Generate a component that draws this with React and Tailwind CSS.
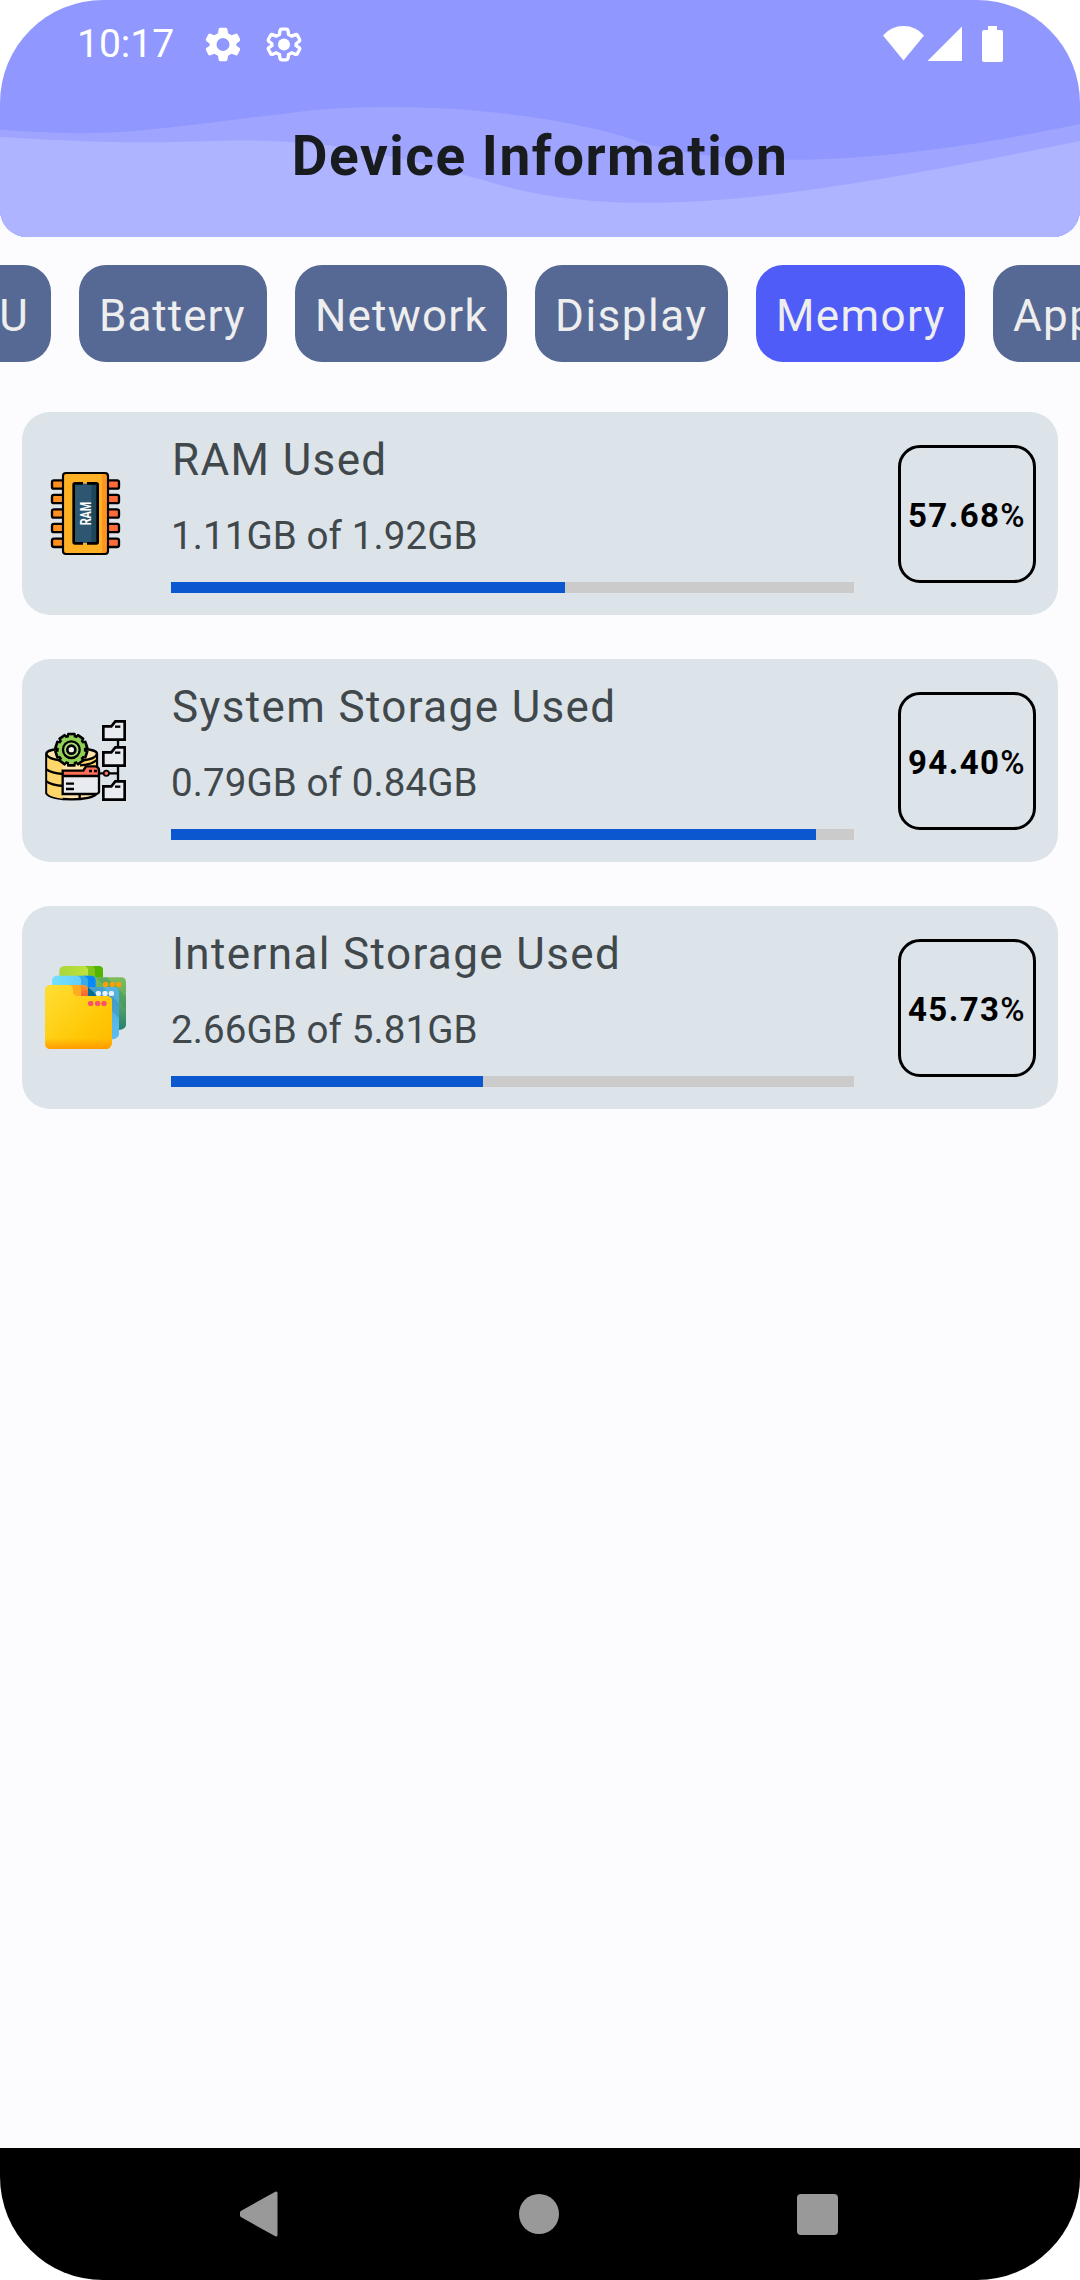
const chips = [
  { label: 'CPU', width: 'w-[136px]', text: 'pl-[25px] tracking-[1.375px]' },
  { label: 'Battery', width: 'w-[188px]', text: 'pl-[20px] tracking-[1px]' },
  { label: 'Network', width: 'w-[212px]', text: 'pl-[20px] tracking-[1.2px]' },
  { label: 'Display', width: 'w-[193px]', text: 'pl-[20px] tracking-[1.5px]' },
  { label: 'Memory', width: 'w-[209px]', text: 'pl-[20px] tracking-[1.375px]', active: true },
  { label: 'Apps', width: 'w-[150px]', text: 'pl-[20px] tracking-[1.375px]' },
];

function RamIcon() {
  const rows = [103, 146.5, 190, 233.5, 278];
  return (
    <svg viewBox="0 0 330 360" className="mt-[38px] w-[110px] h-[120px]">
      {rows.map((y) => (
        <g key={y} stroke="#000" strokeWidth="7">
          <rect x="66" y={y - 12} width="44" height="25" rx="6" fill="#ff8f1f" />
          <rect x="222" y={y - 12} width="45" height="25" rx="6" fill="#ff6c3c" />
        </g>
      ))}
      <rect x="99" y="69" width="135" height="243" rx="9" fill="#ffb125" />
      <path d="M216 69h9q9 0 9 9v225q0 9-9 9h-9z" fill="#ff951f" />
      <rect x="99" y="69" width="135" height="243" rx="9" fill="none" stroke="#000" strokeWidth="6.500" />
      <rect x="131" y="101" width="73" height="178" fill="#2d5670" />
      <rect x="184" y="101" width="20" height="178" fill="#1d4658" />
      <path d="M159 100h-24q-4 0-4 4v172q0 4 4 4h24M171 100h28q4 0 4 4v172q0 4-4 4h-28" fill="none" stroke="#000" strokeWidth="8" />
      <text transform="translate(183 226) rotate(-90)" textLength="71" lengthAdjust="spacingAndGlyphs" fontSize="45" fontWeight="700" fontFamily="Roboto, sans-serif" fill="#fff">RAM</text>
    </svg>
  );
}

function SystemIcon() {
  const teeth = [0, 36, 72, 108, 144, 180, 216, 252, 288, 324];
  return (
    <svg viewBox="0 0 330 360" className="mt-[41px] w-[110px] h-[120px]">
      <path d="M49 161C49 139 201 139 201 161V280C190 304 60 304 49 280Z" fill="#ffe5a9" stroke="#000" strokeWidth="7" />
      <path d="M52 166Q70 178 98 181V296Q58 292 52 280Z" fill="#ffd66a" />
      <path d="M150 180Q185 176 198 166V202H150Z" fill="#ffd66a" />
      <path d="M49 161C55 192 195 192 201 161M49 208Q64 219 99 222M49 244Q64 255 99 258M150 196Q185 194 200 180" fill="none" stroke="#000" strokeWidth="7" />
      <g fill="#000">
        {teeth.map((a) => <rect key={a} x="111" y="98" width="26" height="26" rx="3" transform={`rotate(${a} 124 149)`} />)}
        <circle cx="124" cy="149" r="46" />
      </g>
      <g fill="#91cf56">
        {teeth.map((a) => <rect key={a} x="117" y="106" width="14" height="20" transform={`rotate(${a} 124 149)`} />)}
        <circle cx="124" cy="149" r="38" />
      </g>
      <circle cx="124" cy="149" r="25" fill="#a7dd75" stroke="#000" strokeWidth="7" />
      <circle cx="124" cy="149" r="12" fill="#f0f2f4" stroke="#000" strokeWidth="8" />
      <path d="M98 212H160L168 199H197Q207 201 207 211V276Q205 282 196 282H98Z" fill="#e8ebf0" />
      <path d="M98 212H160L168 199H197Q207 201 207 211V228H98Z" fill="#fc7058" />
      <path d="M98 212H160L168 199H197Q207 201 207 211V276Q205 282 196 282H98ZM98 228H207M108 251H132M108 267H132M149 283V295M177 213H186M192 213H201" fill="none" stroke="#000" strokeWidth="7" />
      <path d="M264 116V146M264 196V247M207 220H264" stroke="#000" strokeWidth="7" />
      <ellipse cx="229" cy="220" rx="8" ry="8" fill="#fc7058" stroke="#000" strokeWidth="5" />
      {[0, 78, 180].map((y) => (
        <g key={y} transform={`translate(0 ${y})`}>
          <path d="M220 119V79H244L256 64H284V119Z" fill="#e8ebf0" stroke="#000" strokeWidth="8" />
          <path d="M255 80H271" stroke="#000" strokeWidth="7" />
        </g>
      ))}
    </svg>
  );
}

function FoldersIcon() {
  return (
    <svg viewBox="0 0 330 360" className="mt-[44px] w-[110px] h-[120px]">
      <defs>
        <linearGradient id="yellow" x1="0" y1="0" x2="1" y2="1"><stop offset="0" stopColor="#ffdf35" /><stop offset="0.65" stopColor="#ffc806" /><stop offset="1" stopColor="#ffb800" /></linearGradient>
        <linearGradient id="base" x1="0" y1="0" x2="0" y2="1"><stop offset="0" stopColor="#ff9a00" stopOpacity="0" /><stop offset="1" stopColor="#ff9a00" /></linearGradient>
        <linearGradient id="green" x1="0" y1="0" x2="0" y2="1"><stop offset="0" stopColor="#8fc456" /><stop offset="0.5" stopColor="#60ad63" /><stop offset="1" stopColor="#26806d" /></linearGradient>
        <linearGradient id="sky" x1="0" y1="0" x2="0" y2="1"><stop offset="0" stopColor="#5bbbe6" /><stop offset="0.35" stopColor="#52aedb" /><stop offset="1" stopColor="#5cbdf0" /></linearGradient>
        <linearGradient id="lime" x1="0" y1="0" x2="1" y2="0"><stop offset="0" stopColor="#a8d63a" /><stop offset="1" stopColor="#bfe33c" /></linearGradient>
        <linearGradient id="cyan" x1="0" y1="0" x2="1" y2="0"><stop offset="0" stopColor="#73e2fb" /><stop offset="1" stopColor="#66cdf8" /></linearGradient>
        <linearGradient id="tabs" x1="0" y1="0" x2="0" y2="1"><stop offset="0" stopColor="#ff9a2c" /><stop offset="1" stopColor="#f04e3c" /></linearGradient>
      </defs>
      <path d="M180 48H208Q219 49 219 61V82H276Q288 84 288 96V226Q285 239 267 240H180Z" fill="url(#green)" />
      <path d="M190 48H208Q219 49 219 61V81H190Z" fill="#54b500" />
      <path d="M165 48H184Q195 50 195 61V100H165Z" fill="#80c51d" />
      <path d="M88 82V62Q90 49 103 48H162Q174 50 174 62V82Z" fill="url(#lime)" />
      <path d="M197 82L288 176V140L230 82Z" fill="#2f8560" opacity=".3" />
      <path d="M160 77H185Q197 79 197 91V111H255Q267 113 267 125V254Q262 267 246 268H160Z" fill="url(#sky)" />
      <path d="M160 77H185Q197 79 197 91V111H160Z" fill="#078af8" />
      <path d="M140 77H162Q173 80 174 91V111H140Z" fill="#35ace9" />
      <path d="M66 110V91Q68 78 80 77H141Q153 79 153 91V111Z" fill="url(#cyan)" />
      <path d="M174 111L267 205V160L218 111Z" fill="#1f6e9a" opacity=".28" />
      <path d="M174 111V139H204Z" fill="#086c95" />
      <path d="M140 105H162Q174 107 174 118V150H140Z" fill="url(#tabs)" />
      <path d="M120 105H142Q153 107 153 118V150H120Z" fill="#ffad1e" />
      <path d="M45 120Q45 106 59 105H117Q129 107 129 119V130Q132 138 141 138H234Q246 141 246 151V281Q241 297 228 297H60Q46 295 45 281Z" fill="url(#yellow)" />
      <path d="M45 265H246V281Q241 297 228 297H60Q46 295 45 281Z" fill="url(#base)" />
      {[182, 203, 222].map((x) => <rect key={x} x={x - 8} y="153" width="16" height="15" rx="6" fill="#fb506d" />)}
      {[205, 225, 244].map((x) => <rect key={x} x={x - 8} y="123" width="16" height="15" rx="6" fill="#e9f3ff" />)}
      {[227, 247, 266].map((x) => <rect key={x} x={x - 8} y="96" width="16" height="15" rx="6" fill="#ff9f07" />)}
    </svg>
  );
}

const GEAR = 'M42 2H58Q62 2 63 6L65 19L76 25L88 20Q92 19 94 22L101 35Q103 39 100 42L90 50V56L100 63Q103 66 101 69L94 83Q92 86 88 85L76 80L65 86L63 99Q62 103 58 103H42Q38 103 37 99L35 86L24 80L12 85Q8 86 6 83L-1 69Q-3 66 0 63L10 56V50L0 42Q-3 39 -1 35L6 22Q8 19 12 20L24 25L35 19L37 6Q38 2 42 2Z';

function Header() {
  return (
    <header className="relative h-[237px] shrink-0 overflow-hidden rounded-b-[27px] bg-[#9098ff]">
      <svg viewBox="0 0 1080 237" className="absolute inset-0 h-full w-full">
        <path d="M0 129.500C115 138 130 132 290 113C390 99 550 110 640 142C750 174 910 160 1080 124V237H0Z" fill="#9fa4ff" />
        <path d="M0 137C90 142 130 144 230 140.500C340 139 400 158 480 179C620 225 790 200 1080 141V237H0Z" fill="#aeb4ff" />
      </svg>
      <div className="relative flex h-[88px] items-center pl-[77px] pr-[76px]">
        <span className="w-[128px] text-[39px] leading-[46px] text-white">10:17</span>
        <svg viewBox="-4 0 108 105" className="h-[35px] w-[36px]">
          <path d={GEAR + 'M50 72A19.500 19.500 0 1 0 50 33A19.500 19.500 0 0 0 50 72Z'} fill="#fff" fillRule="evenodd" />
        </svg>
        <svg viewBox="-4 0 108 105" className="ml-[25px] h-[35px] w-[36px]">
          <path d={GEAR} fill="none" stroke="#fff" strokeWidth="11" transform="translate(4.500 4.700) scale(.91)" />
          <circle cx="50" cy="52.500" r="18" fill="#fff" />
        </svg>
        <svg viewBox="0 0 124 40" className="ml-auto h-[40px] w-[124px]">
          <path d="M3 11.500Q11 2 23.500 2T44 11.500L23.500 36.500Z" fill="#fff" />
          <path d="M82 2.500V37H47.500Z" fill="#fff" />
          <path d="M108 2H117V6H121Q123 6 123 8V36Q123 38 121 38H104Q102 38 102 36V8Q102 6 104 6H108Z" fill="#fff" />
        </svg>
      </div>
      <h1 className="relative mt-[36px] text-center text-[55px] font-bold leading-[64px] tracking-[1.5px] text-[#191c1e]">Device Information</h1>
    </header>
  );
}

function Card({ icon, title, detail, value }) {
  return (
    <section className="flex h-[203px] rounded-[28px] bg-[#dce3e9] pl-2 pr-[22px]">
      <div className="w-[141px] shrink-0">{icon}</div>
      <div className="w-[683px] shrink-0 text-[#40484c]">
        <h2 className="mt-[22px] pl-px text-[44px] font-normal leading-[52px] tracking-[1.375px]">{title}</h2>
        <p className="mt-[27px] text-[38.5px] leading-[46px] tracking-[0.1px]">{detail}</p>
        <div className="mt-[23px] h-[11px] bg-[#cbcbcb]">
          <div className="h-full bg-[#0b57d0]" style={{ width: `${value}%` }} />
        </div>
      </div>
      <div className="ml-auto mt-[33px] flex h-[138px] w-[138px] items-center justify-center rounded-[22px] border-[3px] border-black pt-[3px] text-[33px] font-bold tracking-[1.375px] text-black">
        {value}<span className="font-medium">%</span>
      </div>
    </section>
  );
}

export default function App() {
  return (
    <div className="h-[2280px] w-[1080px] overflow-hidden bg-white font-['Roboto',sans-serif]">
      <div className="flex h-full flex-col overflow-hidden rounded-[103px] bg-[#fcfcff]">
        <Header />
        <nav className="mt-[28px] flex h-[97px] shrink-0 gap-[28px] overflow-hidden">
          {chips.map((c, i) => (
            <div key={c.label} className={`${c.width} ${c.text} ${c.active ? 'bg-[#4f5cf7]' : 'bg-[#566994]'} ${i === 0 ? '-ml-[85px]' : ''} flex shrink-0 items-center rounded-[27px] pt-1 text-[44px] text-[#eeeeee]`}>
              {c.label}
            </div>
          ))}
        </nav>
        <main className="mt-[50px] flex flex-1 flex-col gap-[44px] px-[22px]">
          <Card icon={<RamIcon />} title="RAM Used" detail="1.11GB of 1.92GB" value="57.68" />
          <Card icon={<SystemIcon />} title="System Storage Used" detail="0.79GB of 0.84GB" value="94.40" />
          <Card icon={<FoldersIcon />} title="Internal Storage Used" detail="2.66GB of 5.81GB" value="45.73" />
        </main>
        <footer className="flex h-[132px] shrink-0 items-center justify-between bg-black pl-[240px] pr-[242px]">
          <svg viewBox="0 0 39 46" className="h-[46px] w-[39px]"><path d="M2 21L36 2V44L2 25Q0 23 2 21Z" fill="#999" stroke="#999" strokeWidth="3" strokeLinejoin="round" /></svg>
          <div className="ml-[2px] h-[40px] w-[40px] rounded-full bg-[#999999]" />
          <div className="h-[41px] w-[41px] rounded-[4px] bg-[#999999]" />
        </footer>
      </div>
    </div>
  );
}
